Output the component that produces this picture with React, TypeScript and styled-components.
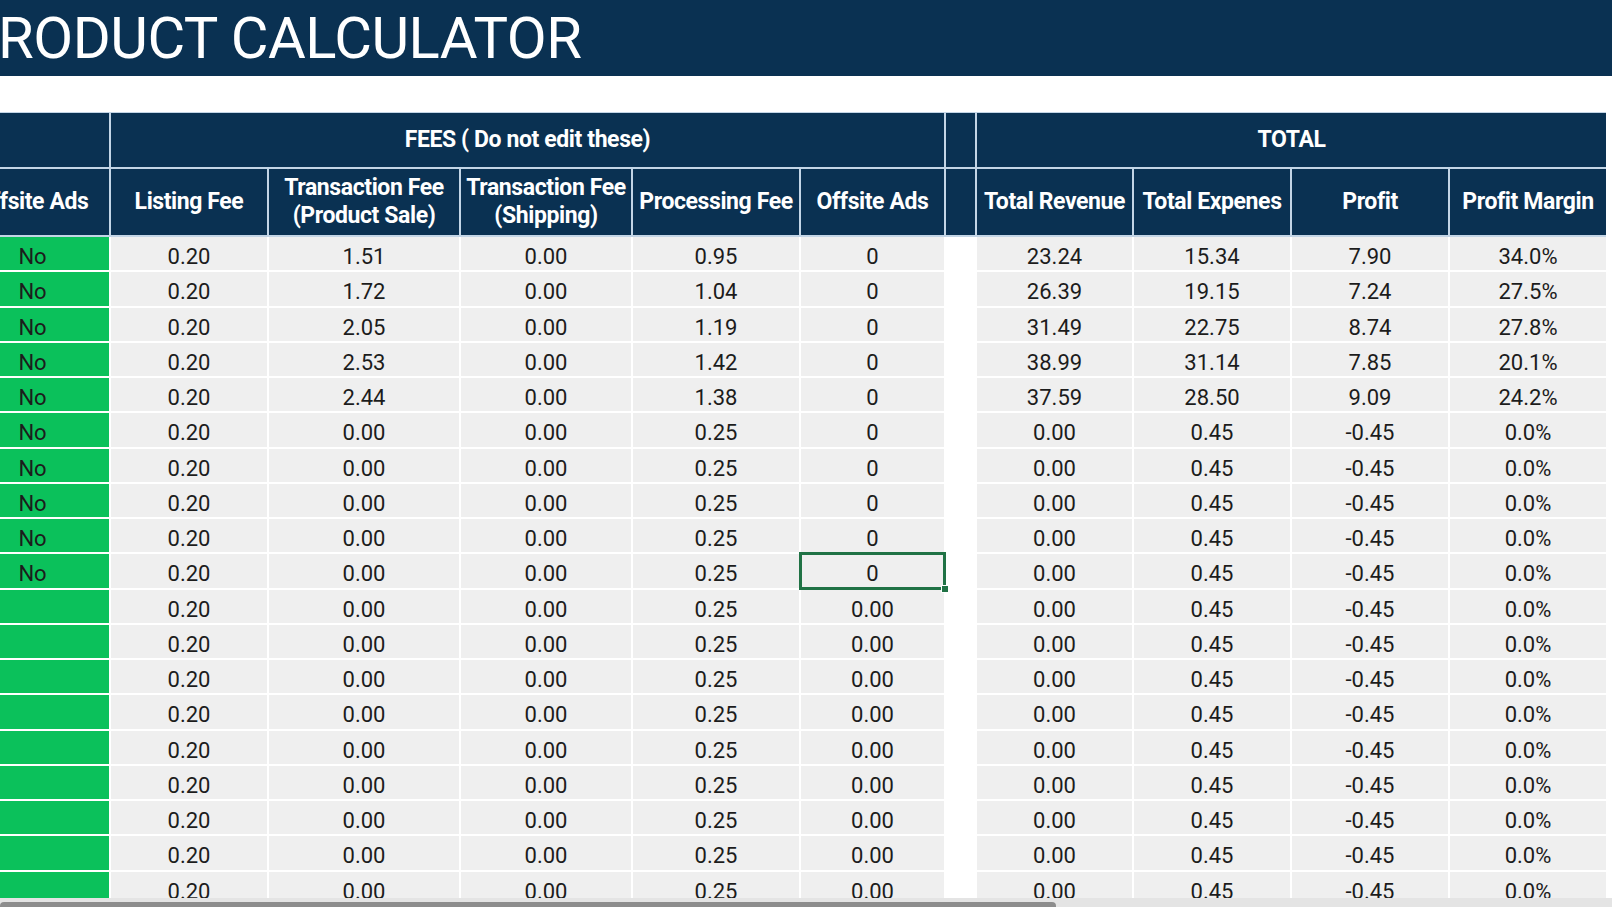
import React from "react";
import styled, { createGlobalStyle, css } from "styled-components";

const NAVY = "#0a3152";
const HEAD_LINE = "#c3d5e6";
const GRAY = "#efefef";
const GREEN = "#0bc15b";
const COLS = "153px 156px 190px 170px 166px 143px 29px 155px 156px 156px 156px";

const GlobalStyle = createGlobalStyle`
  html, body { margin: 0; padding: 0; background: #ffffff; }
  body { font-family: Roboto, "Liberation Sans", Arial, sans-serif; }
`;

const Page = styled.div`
  width: 1612px;
  height: 907px;
  overflow: hidden;
  display: flex;
  flex-direction: column;
  background: #ffffff;
`;

const TitleBar = styled.header`
  height: 76px;
  flex-shrink: 0;
  background: ${NAVY};
  overflow: hidden;
`;

const Title = styled.h1`
  margin: 0 0 0 -38px;
  font-family: Roboto, "Liberation Sans", sans-serif;
  font-weight: 400;
  font-size: 58px;
  line-height: 76px;
  letter-spacing: -0.5px;
  color: #ffffff;
  white-space: nowrap;
`;

const Spacer = styled.div`
  height: 36px;
  flex-shrink: 0;
`;

const Sheet = styled.section`
  flex: 1;
  overflow: hidden;
  margin-left: -44px;
  width: 1650px;
`;

const HeaderGrid = styled.div`
  display: grid;
  grid-template-columns: ${COLS};
  grid-template-rows: 54px 66px;
  column-gap: 2px;
  row-gap: 2px;
  padding: 1px 0 2px;
  background: ${HEAD_LINE};
`;

const HeadCell = styled.div<{ $from?: number; $to?: number }>`
  background: ${NAVY};
  color: #ffffff;
  font-weight: 700;
  font-size: 23px;
  letter-spacing: -0.4px;
  line-height: 28px;
  display: flex;
  align-items: center;
  justify-content: center;
  text-align: center;
  white-space: nowrap;
  ${(p) =>
    p.$from
      ? css`
          grid-column: ${p.$from} / ${p.$to};
        `
      : ""}
`;

const BodyGrid = styled.div`
  display: grid;
  grid-template-columns: ${COLS};
  grid-auto-rows: 33.25px;
  column-gap: 2px;
  row-gap: 2px;
  background: #ffffff;
`;

type Kind = "green" | "gray" | "blank";

const Cell = styled.div<{ $kind: Kind; $selected?: boolean }>`
  position: relative;
  background: ${(p) => (p.$kind === "green" ? GREEN : p.$kind === "blank" ? "#ffffff" : GRAY)};
  color: #1c1c1c;
  font-size: 22px;
  font-weight: 400;
  display: flex;
  align-items: center;
  justify-content: center;
  padding-top: 6px;
  box-sizing: border-box;
  white-space: nowrap;
  ${(p) =>
    p.$selected &&
    css`
      &::after {
        content: "";
        position: absolute;
        inset: -2px;
        border: 3px solid #207245;
        pointer-events: none;
      }
      &::before {
        content: "";
        position: absolute;
        right: -5px;
        bottom: -5px;
        width: 6px;
        height: 6px;
        background: #207245;
        border: 1px solid #ffffff;
        z-index: 1;
      }
    `}
`;

const ScrollTrack = styled.div`
  height: 9px;
  flex-shrink: 0;
  background: #e4e4e4;
  display: flex;
  align-items: flex-end;
`;

const ScrollThumb = styled.div`
  width: 1056px;
  height: 5px;
  background: #8d8d8d;
  border-radius: 4px 4px 0 0;
`;

type Row = {
  ads: string;
  listing: string;
  product: string;
  shipping: string;
  processing: string;
  offsite: string;
  revenue: string;
  expenses: string;
  profit: string;
  margin: string;
};

const filled: Row[] = [
  ["1.51", "0.95", "23.24", "15.34", "7.90", "34.0%"],
  ["1.72", "1.04", "26.39", "19.15", "7.24", "27.5%"],
  ["2.05", "1.19", "31.49", "22.75", "8.74", "27.8%"],
  ["2.53", "1.42", "38.99", "31.14", "7.85", "20.1%"],
  ["2.44", "1.38", "37.59", "28.50", "9.09", "24.2%"],
].map(([product, processing, revenue, expenses, profit, margin]) => ({
  ads: "No",
  listing: "0.20",
  product,
  shipping: "0.00",
  processing,
  offsite: "0",
  revenue,
  expenses,
  profit,
  margin,
}));

const zeroRow = (ads: string, offsite: string): Row => ({
  ads,
  listing: "0.20",
  product: "0.00",
  shipping: "0.00",
  processing: "0.25",
  offsite,
  revenue: "0.00",
  expenses: "0.45",
  profit: "-0.45",
  margin: "0.0%",
});

const rows: Row[] = [
  ...filled,
  ...Array.from({ length: 5 }, () => zeroRow("No", "0")),
  ...Array.from({ length: 10 }, () => zeroRow("", "0.00")),
];

const SELECTED_ROW = 9;

export default function App() {
  return (
    <>
      <GlobalStyle />
      <Page>
        <TitleBar>
          <Title>PRODUCT CALCULATOR</Title>
        </TitleBar>
        <Spacer />
        <Sheet>
          <HeaderGrid>
            <HeadCell />
            <HeadCell $from={2} $to={7}>
              FEES ( Do not edit these)
            </HeadCell>
            <HeadCell />
            <HeadCell $from={8} $to={12}>
              TOTAL
            </HeadCell>
            <HeadCell>Offsite Ads</HeadCell>
            <HeadCell>Listing Fee</HeadCell>
            <HeadCell>
              Transaction Fee
              <br />
              (Product Sale)
            </HeadCell>
            <HeadCell>
              Transaction Fee
              <br />
              (Shipping)
            </HeadCell>
            <HeadCell>Processing Fee</HeadCell>
            <HeadCell>Offsite Ads</HeadCell>
            <HeadCell />
            <HeadCell>Total Revenue</HeadCell>
            <HeadCell>Total Expenes</HeadCell>
            <HeadCell>Profit</HeadCell>
            <HeadCell>Profit Margin</HeadCell>
          </HeaderGrid>
          <BodyGrid>
            {rows.map((r, i) => (
              <React.Fragment key={i}>
                <Cell $kind="green">{r.ads}</Cell>
                <Cell $kind="gray">{r.listing}</Cell>
                <Cell $kind="gray">{r.product}</Cell>
                <Cell $kind="gray">{r.shipping}</Cell>
                <Cell $kind="gray">{r.processing}</Cell>
                <Cell $kind="gray" $selected={i === SELECTED_ROW}>
                  {r.offsite}
                </Cell>
                <Cell $kind="blank" />
                <Cell $kind="gray">{r.revenue}</Cell>
                <Cell $kind="gray">{r.expenses}</Cell>
                <Cell $kind="gray">{r.profit}</Cell>
                <Cell $kind="gray">{r.margin}</Cell>
              </React.Fragment>
            ))}
          </BodyGrid>
        </Sheet>
        <ScrollTrack>
          <ScrollThumb />
        </ScrollTrack>
      </Page>
    </>
  );
}
